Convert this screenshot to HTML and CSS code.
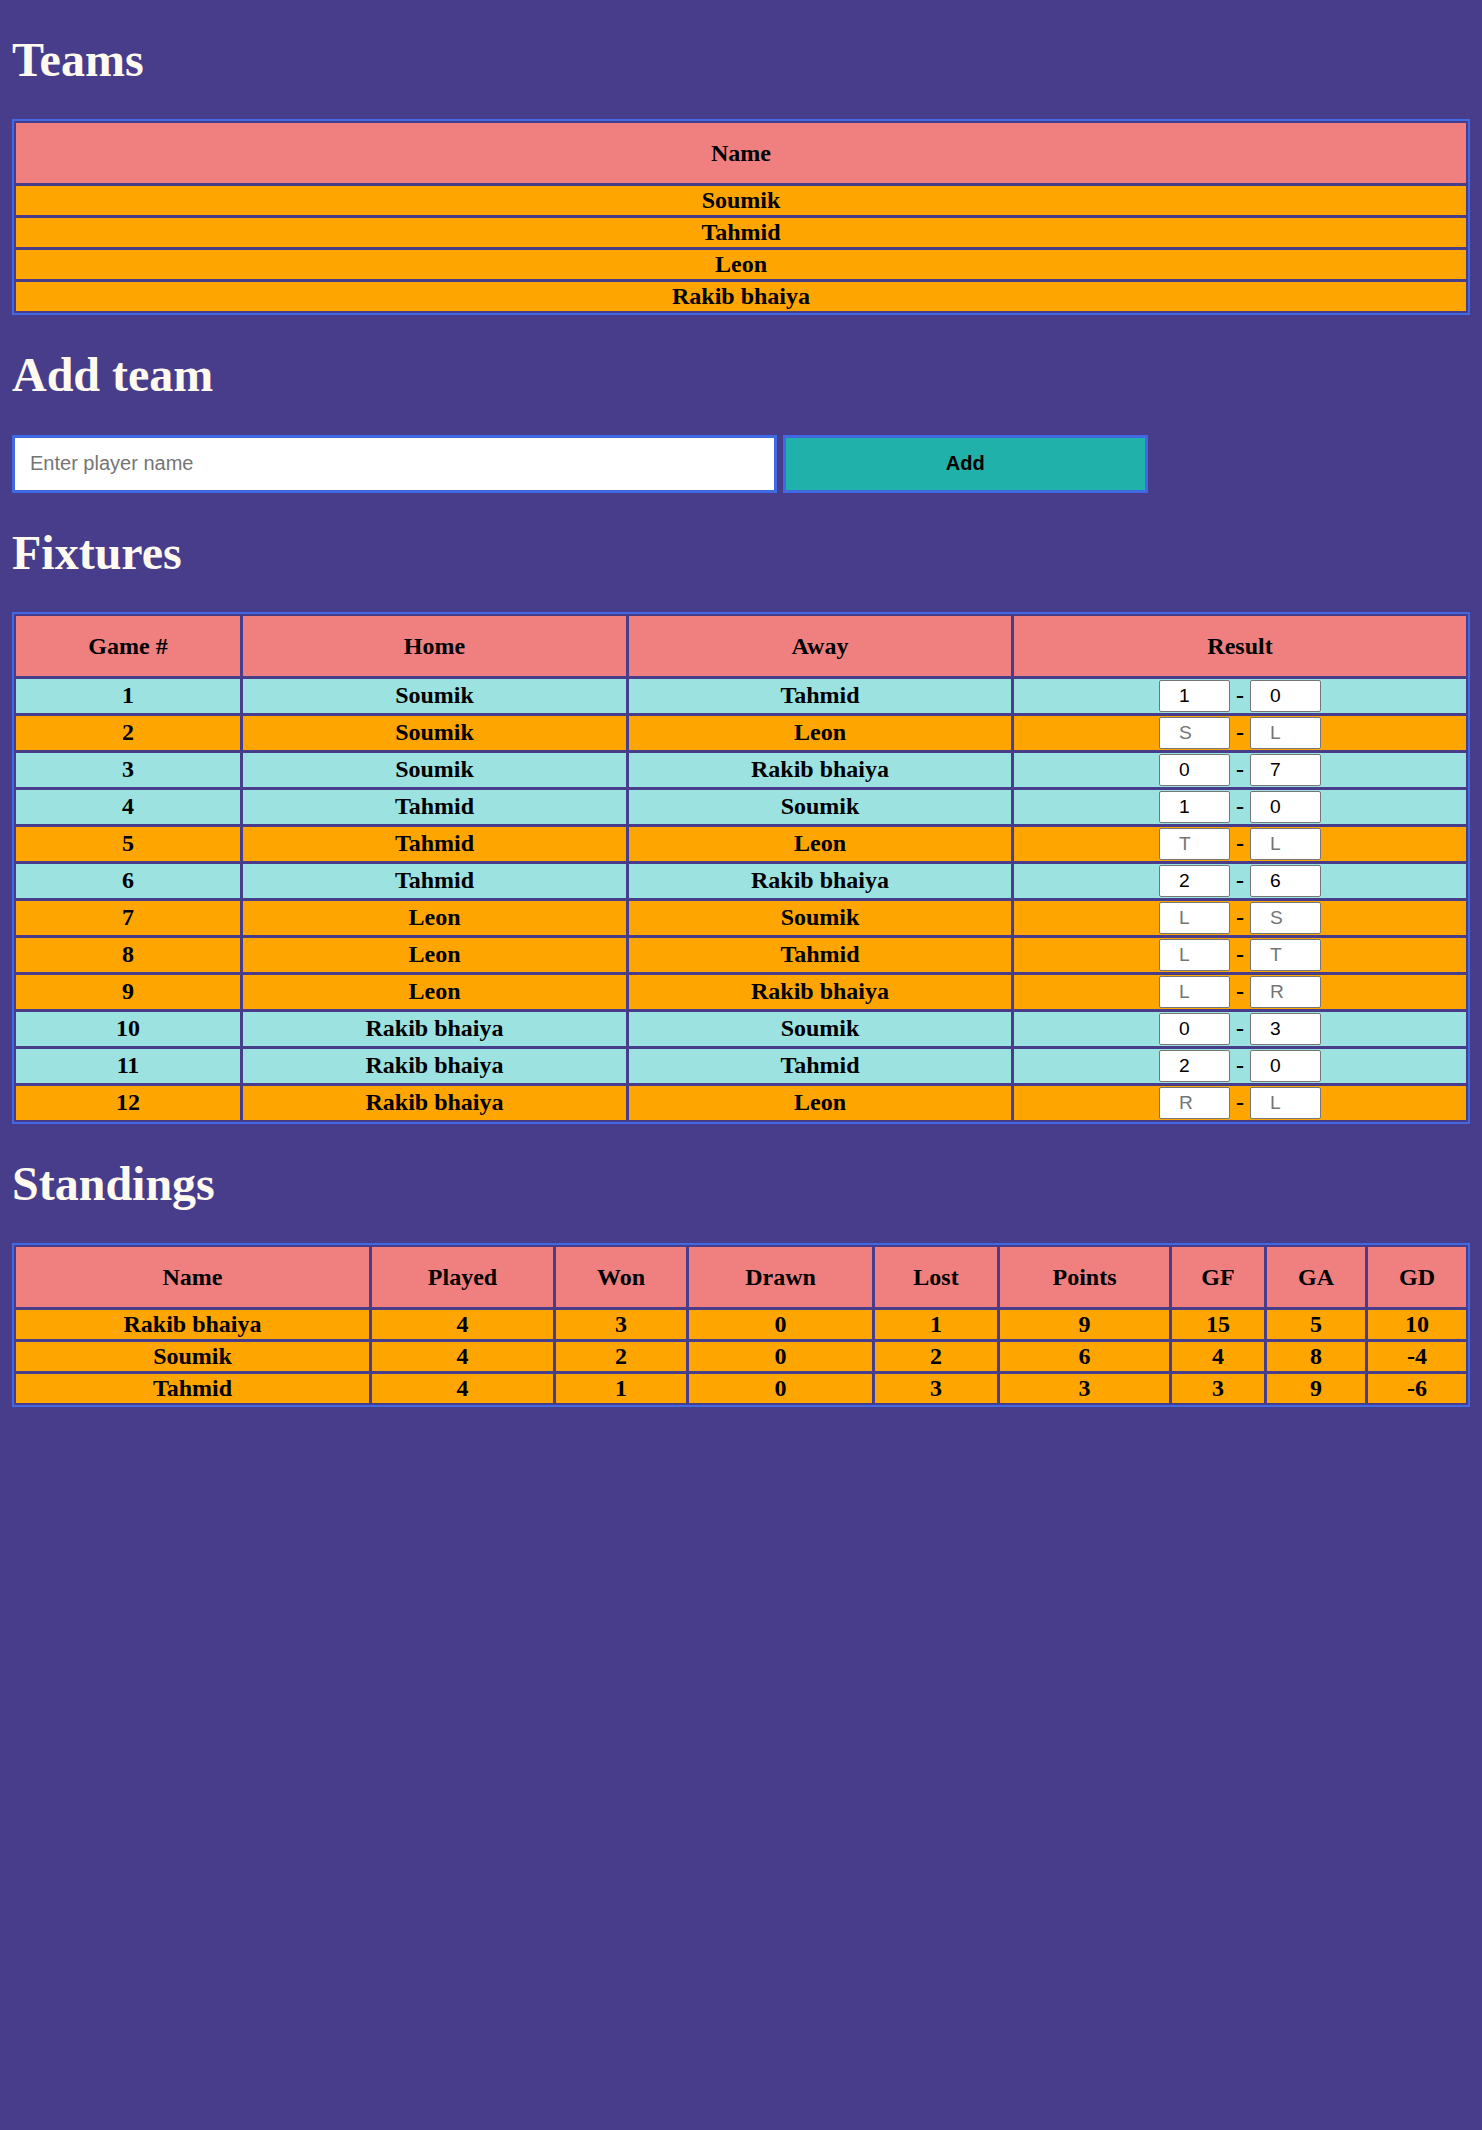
FILE: index.html
```html
<!DOCTYPE html>
<html lang="en">
<head>
<meta charset="utf-8">
<title>Tournament</title>
<link rel="stylesheet" href="styles.css">
</head>
<body>
  <h1>Teams</h1>
  <table class="grid teams">
    <thead>
      <tr><th>Name</th></tr>
    </thead>
    <tbody>
      <tr class="pending"><td>Soumik</td></tr>
      <tr class="pending"><td>Tahmid</td></tr>
      <tr class="pending"><td>Leon</td></tr>
      <tr class="pending"><td>Rakib bhaiya</td></tr>
    </tbody>
  </table>

  <h1>Add team</h1>
  <div class="add-form">
    <input class="name-input" type="text" placeholder="Enter player name">
    <button class="add-btn" type="button">Add</button>
  </div>

  <h1>Fixtures</h1>
  <table class="grid fixtures">
    <thead>
      <tr>
        <th class="c-game">Game #</th>
        <th class="c-home">Home</th>
        <th class="c-away">Away</th>
        <th class="c-result">Result</th>
      </tr>
    </thead>
    <tbody>
      <tr class="played"><td>1</td><td>Soumik</td><td>Tahmid</td><td><div class="score"><input class="goal" type="text" value="1"><span class="dash">-</span><input class="goal" type="text" value="0"></div></td></tr>
      <tr class="pending"><td>2</td><td>Soumik</td><td>Leon</td><td><div class="score"><input class="goal" type="text" placeholder="S"><span class="dash">-</span><input class="goal" type="text" placeholder="L"></div></td></tr>
      <tr class="played"><td>3</td><td>Soumik</td><td>Rakib bhaiya</td><td><div class="score"><input class="goal" type="text" value="0"><span class="dash">-</span><input class="goal" type="text" value="7"></div></td></tr>
      <tr class="played"><td>4</td><td>Tahmid</td><td>Soumik</td><td><div class="score"><input class="goal" type="text" value="1"><span class="dash">-</span><input class="goal" type="text" value="0"></div></td></tr>
      <tr class="pending"><td>5</td><td>Tahmid</td><td>Leon</td><td><div class="score"><input class="goal" type="text" placeholder="T"><span class="dash">-</span><input class="goal" type="text" placeholder="L"></div></td></tr>
      <tr class="played"><td>6</td><td>Tahmid</td><td>Rakib bhaiya</td><td><div class="score"><input class="goal" type="text" value="2"><span class="dash">-</span><input class="goal" type="text" value="6"></div></td></tr>
      <tr class="pending"><td>7</td><td>Leon</td><td>Soumik</td><td><div class="score"><input class="goal" type="text" placeholder="L"><span class="dash">-</span><input class="goal" type="text" placeholder="S"></div></td></tr>
      <tr class="pending"><td>8</td><td>Leon</td><td>Tahmid</td><td><div class="score"><input class="goal" type="text" placeholder="L"><span class="dash">-</span><input class="goal" type="text" placeholder="T"></div></td></tr>
      <tr class="pending"><td>9</td><td>Leon</td><td>Rakib bhaiya</td><td><div class="score"><input class="goal" type="text" placeholder="L"><span class="dash">-</span><input class="goal" type="text" placeholder="R"></div></td></tr>
      <tr class="played"><td>10</td><td>Rakib bhaiya</td><td>Soumik</td><td><div class="score"><input class="goal" type="text" value="0"><span class="dash">-</span><input class="goal" type="text" value="3"></div></td></tr>
      <tr class="played"><td>11</td><td>Rakib bhaiya</td><td>Tahmid</td><td><div class="score"><input class="goal" type="text" value="2"><span class="dash">-</span><input class="goal" type="text" value="0"></div></td></tr>
      <tr class="pending"><td>12</td><td>Rakib bhaiya</td><td>Leon</td><td><div class="score"><input class="goal" type="text" placeholder="R"><span class="dash">-</span><input class="goal" type="text" placeholder="L"></div></td></tr>
    </tbody>
  </table>

  <h1>Standings</h1>
  <table class="grid standings">
    <thead>
      <tr>
        <th class="s-name">Name</th>
        <th class="s-played">Played</th>
        <th class="s-won">Won</th>
        <th class="s-drawn">Drawn</th>
        <th class="s-lost">Lost</th>
        <th class="s-points">Points</th>
        <th class="s-gf">GF</th>
        <th class="s-ga">GA</th>
        <th class="s-gd">GD</th>
      </tr>
    </thead>
    <tbody>
      <tr class="pending"><td>Rakib bhaiya</td><td>4</td><td>3</td><td>0</td><td>1</td><td>9</td><td>15</td><td>5</td><td>10</td></tr>
      <tr class="pending"><td>Soumik</td><td>4</td><td>2</td><td>0</td><td>2</td><td>6</td><td>4</td><td>8</td><td>-4</td></tr>
      <tr class="pending"><td>Tahmid</td><td>4</td><td>1</td><td>0</td><td>3</td><td>3</td><td>3</td><td>9</td><td>-6</td></tr>
    </tbody>
  </table>
</body>
</html>
```

FILE: styles.css
```css
html {
  margin: 0;
  padding: 0;
}

body {
  margin: 0;
  padding: 0 12px 12px;
  background: #483d8b;
  font-family: "Liberation Serif", "Times New Roman", serif;
  font-size: 24px;
  color: #000;
}

h1 {
  font-size: 2em;
  margin: 0.67em 0;
  color: #fffaf0;
  font-weight: bold;
}

.grid {
  width: 100%;
  border: 2px solid #4169e1;
  border-collapse: separate;
  border-spacing: 2px;
  table-layout: fixed;
}

.grid th,
.grid td {
  box-sizing: border-box;
  padding: 1px;
  text-align: center;
  vertical-align: middle;
  font-weight: bold;
  line-height: 27px;
}

.grid th {
  background: #f08080;
  padding: 16px 1px;
  line-height: 28px;
}

.grid tbody td {
  border-top: 1px solid #483d8b;
}

.grid th + th,
.grid td + td {
  border-left: 1px solid #483d8b;
}

.grid tr.pending td {
  background: #ffa500;
}

.grid tr.played td {
  background: #9be2e0;
}

/* Add team form */
.add-form {
  display: flex;
  align-items: stretch;
  gap: 6px;
}

.name-input {
  box-sizing: content-box;
  width: 50%;
  height: 22px;
  padding: 15px;
  border: 3px solid #4169e1;
  background: #fff;
  font-family: "Liberation Sans", Arial, sans-serif;
  font-size: 20px;
  color: #000;
  margin: 0;
  outline: none;
}

.name-input::placeholder {
  color: #757575;
}

.add-btn {
  box-sizing: border-box;
  width: 25%;
  margin: 0;
  border: 3px solid #4169e1;
  background: #20b2aa;
  font-family: "Liberation Sans", Arial, sans-serif;
  font-size: 20px;
  font-weight: bold;
  color: #000;
  padding: 0;
}

/* Fixtures */
.c-game { width: 224px; }
.c-home { width: 384px; }
.c-away { width: 383px; }

.score {
  display: flex;
  justify-content: center;
  align-items: center;
  gap: 6px;
}

.goal {
  box-sizing: border-box;
  width: 71px;
  height: 32px;
  margin: 0;
  padding: 0 0 0 19px;
  border: 1px solid #767676;
  border-radius: 2px;
  background: #fff;
  font-family: "Liberation Sans", Arial, sans-serif;
  font-size: 19.2px;
  color: #000;
}

.goal::placeholder {
  color: #757575;
}

.dash {
  font-weight: bold;
  line-height: 27px;
}

/* Standings */
.s-name { width: 353px; }
.s-played { width: 182px; }
.s-won { width: 131px; }
.s-drawn { width: 184px; }
.s-lost { width: 123px; }
.s-points { width: 170px; }
.s-gf { width: 93px; }
.s-ga { width: 99px; }
```
